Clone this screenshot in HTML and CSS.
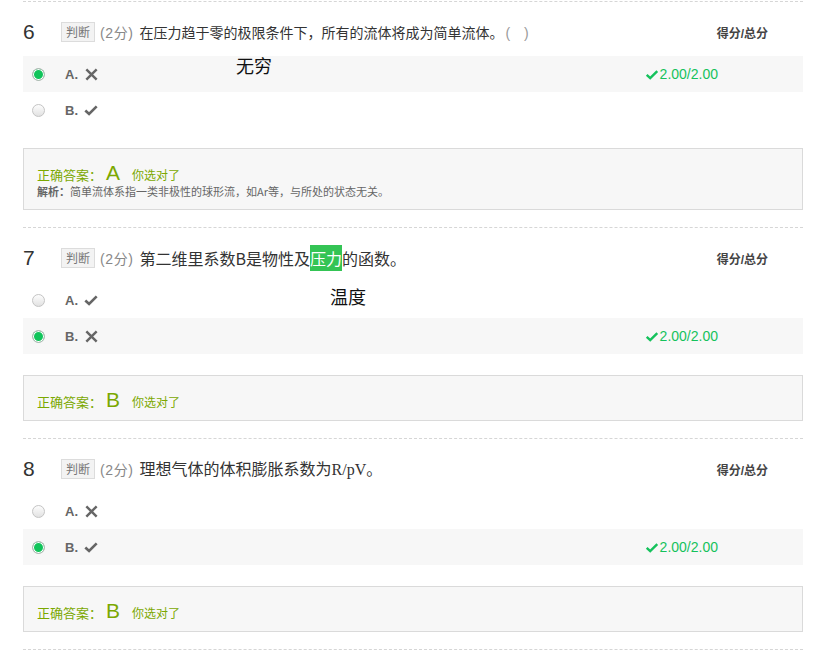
FILE: index.html
```html
<!DOCTYPE html>
<html lang="zh-CN">
<head>
<meta charset="utf-8">
<title>判断题</title>
<link rel="stylesheet" href="styles.css">
</head>
<body>
<div class="wrap">
  <svg width="0" height="0" class="defs">
    <defs>
      <symbol id="ic-x" viewBox="0 0 16 16"><path d="M2.5 2.5 L13.5 13.5 M13.5 2.5 L2.5 13.5" stroke="currentColor" stroke-width="2.6" fill="none"/></symbol>
      <symbol id="ic-ok" viewBox="0 0 16 16"><path d="M1.5 8.5 L5.8 12.5 L14.5 3.8" stroke="currentColor" stroke-width="3" fill="none"/></symbol>
    </defs>
  </svg>

  <section class="q q-first">
    <div class="q-head">
      <span class="num">6</span>
      <span class="tag">判断</span>
      <span class="pts">(2分)</span>
      <span class="qtext">在压力趋于零的极限条件下，所有的流体将成为简单流体。<span class="paren">(&nbsp;&nbsp;)</span></span>
      <span class="total">得分/总分</span>
    </div>
    <div class="opt picked">
      <span class="radio on"></span>
      <span class="letter">A.</span>
      <svg class="mark mx"><use href="#ic-x"/></svg>
      <span class="score"><svg class="sok"><use href="#ic-ok"/></svg>2.00/2.00</span>
    </div>
    <div class="opt">
      <span class="radio"></span>
      <span class="letter">B.</span>
      <svg class="mark mc"><use href="#ic-ok"/></svg>
    </div>
    <div class="answer">
      <div class="ans-line"><span class="ans-label">正确答案：</span><span class="ans-key">A</span><span class="ans-ok">你选对了</span></div>
      <div class="analysis"><b>解析：</b>简单流体系指一类非极性的球形流，如Ar等，与所处的状态无关。</div>
    </div>
    <span class="note note-6">无穷</span>
  </section>

  <section class="q">
    <div class="q-head">
      <span class="num">7</span>
      <span class="tag">判断</span>
      <span class="pts">(2分)</span>
      <span class="qtext lg">第二维里系数B是物性及<span class="hl">压力</span>的函数。</span>
      <span class="total">得分/总分</span>
    </div>
    <div class="opt">
      <span class="radio"></span>
      <span class="letter">A.</span>
      <svg class="mark mc"><use href="#ic-ok"/></svg>
    </div>
    <div class="opt picked">
      <span class="radio on"></span>
      <span class="letter">B.</span>
      <svg class="mark mx"><use href="#ic-x"/></svg>
      <span class="score"><svg class="sok"><use href="#ic-ok"/></svg>2.00/2.00</span>
    </div>
    <div class="answer">
      <div class="ans-line"><span class="ans-label">正确答案：</span><span class="ans-key">B</span><span class="ans-ok">你选对了</span></div>
    </div>
    <span class="note note-7">温度</span>
  </section>

  <section class="q">
    <div class="q-head">
      <span class="num">8</span>
      <span class="tag">判断</span>
      <span class="pts">(2分)</span>
      <span class="qtext lg">理想气体的体积膨胀系数为<span class="serif">R/pV</span>。</span>
      <span class="total">得分/总分</span>
    </div>
    <div class="opt">
      <span class="radio"></span>
      <span class="letter">A.</span>
      <svg class="mark mx"><use href="#ic-x"/></svg>
    </div>
    <div class="opt picked">
      <span class="radio on"></span>
      <span class="letter">B.</span>
      <svg class="mark mc"><use href="#ic-ok"/></svg>
      <span class="score"><svg class="sok"><use href="#ic-ok"/></svg>2.00/2.00</span>
    </div>
    <div class="answer">
      <div class="ans-line"><span class="ans-label">正确答案：</span><span class="ans-key">B</span><span class="ans-ok">你选对了</span></div>
    </div>
  </section>
  <div class="end-line"></div>
</div>
</body>
</html>
```

FILE: styles.css
```css
html, body {
  margin: 0;
  padding: 0;
  background: #fff;
}
body {
  font-family: "Liberation Sans", Arial, "Noto Sans CJK SC", sans-serif;
  color: #333;
}
.defs {
  position: absolute;
  width: 0;
  height: 0;
  overflow: hidden;
}
.wrap {
  margin-left: 23px;
  width: 780px;
  padding-top: 1px;
}
.q {
  position: relative;
  border-top: 1px dashed #d6d6d6;
  padding-bottom: 17px;
}
.end-line {
  border-top: 1px dashed #d6d6d6;
}
.q-head {
  display: flex;
  align-items: center;
  height: 24px;
  padding: 18px 0 12px;
}
.num {
  width: 38px;
  font-size: 21px;
  color: #333;
  line-height: 24px;
}
.tag {
  box-sizing: border-box;
  width: 34px;
  height: 20px;
  line-height: 18px;
  border: 1px solid #dcdcdc;
  background: #f3f3f3;
  font-size: 12px;
  color: #777;
  text-align: center;
  font-family: "Noto Sans CJK SC", sans-serif;
}
.pts {
  margin-left: 5px;
  font-size: 14px;
  color: #888;
  letter-spacing: 0.6px;
}
.qtext {
  margin-left: 6px;
  font-size: 14px;
  color: #333;
  font-family: "Noto Sans CJK SC", sans-serif;
  line-height: 24px;
}
.qtext.lg {
  font-size: 16px;
}
.paren {
  color: #999;
  font-family: "Liberation Sans", sans-serif;
  margin-left: 2px;
  letter-spacing: 2px;
}
.hl {
  display: inline-block;
  background: #34c455;
  color: #fff;
  line-height: 26px;
}
.serif {
  font-family: "Liberation Serif", serif;
  font-size: 16px;
}
.total {
  margin-left: auto;
  padding-right: 35px;
  font-size: 12px;
  font-weight: bold;
  color: #444;
}
.opt {
  display: flex;
  align-items: center;
  height: 36px;
  padding-left: 9px;
}
.opt.picked {
  background: #f7f7f7;
}
.radio {
  box-sizing: border-box;
  width: 13px;
  height: 13px;
  border-radius: 50%;
  border: 1px solid #c4c4c4;
  background: linear-gradient(#fdfdfd, #e2e2e2);
  flex: none;
}
.radio.on {
  background: #10c45a;
  border: 1px solid #b8b8b8;
  box-shadow: inset 0 0 0 1px #fff;
}
.letter {
  margin-left: 20px;
  font-size: 13px;
  font-weight: bold;
  color: #666;
}
.mark {
  margin-left: 6px;
  width: 15px;
  height: 15px;
  color: #666;
}
.mc {
  width: 14px;
  height: 14px;
}
.score {
  margin-left: auto;
  margin-right: 85px;
  display: flex;
  align-items: center;
  color: #15c25c;
  font-size: 14px;
}
.sok {
  width: 14px;
  height: 13px;
  margin-right: 1px;
  color: #15c25c;
}
.answer {
  margin-top: 21px;
  border: 1px solid #dadada;
  background: #f7f7f7;
  padding: 14px 13px 10px;
}
.q-first .answer {
  margin-top: 20px;
}
.ans-line {
  display: flex;
  align-items: baseline;
  height: 20px;
  line-height: 20px;
  color: #7ba800;
  font-family: "Noto Sans CJK SC", sans-serif;
}
.ans-label {
  font-size: 13px;
}
.ans-key {
  font-family: "Liberation Sans", sans-serif;
  font-size: 21px;
  margin-left: 4px;
  margin-right: 12px;
}
.ans-ok {
  font-size: 12px;
}
.analysis {
  font-size: 11px;
  line-height: 16px;
  color: #666;
  font-family: "Noto Sans CJK SC", sans-serif;
}
.analysis b {
  color: #666;
}
.note {
  position: absolute;
  font-size: 18px;
  line-height: 22px;
  color: #111;
  font-family: "Noto Sans CJK SC", sans-serif;
}
.note-6 {
  left: 213px;
  top: 52px;
}
.note-7 {
  left: 307px;
  top: 57px;
}
```
